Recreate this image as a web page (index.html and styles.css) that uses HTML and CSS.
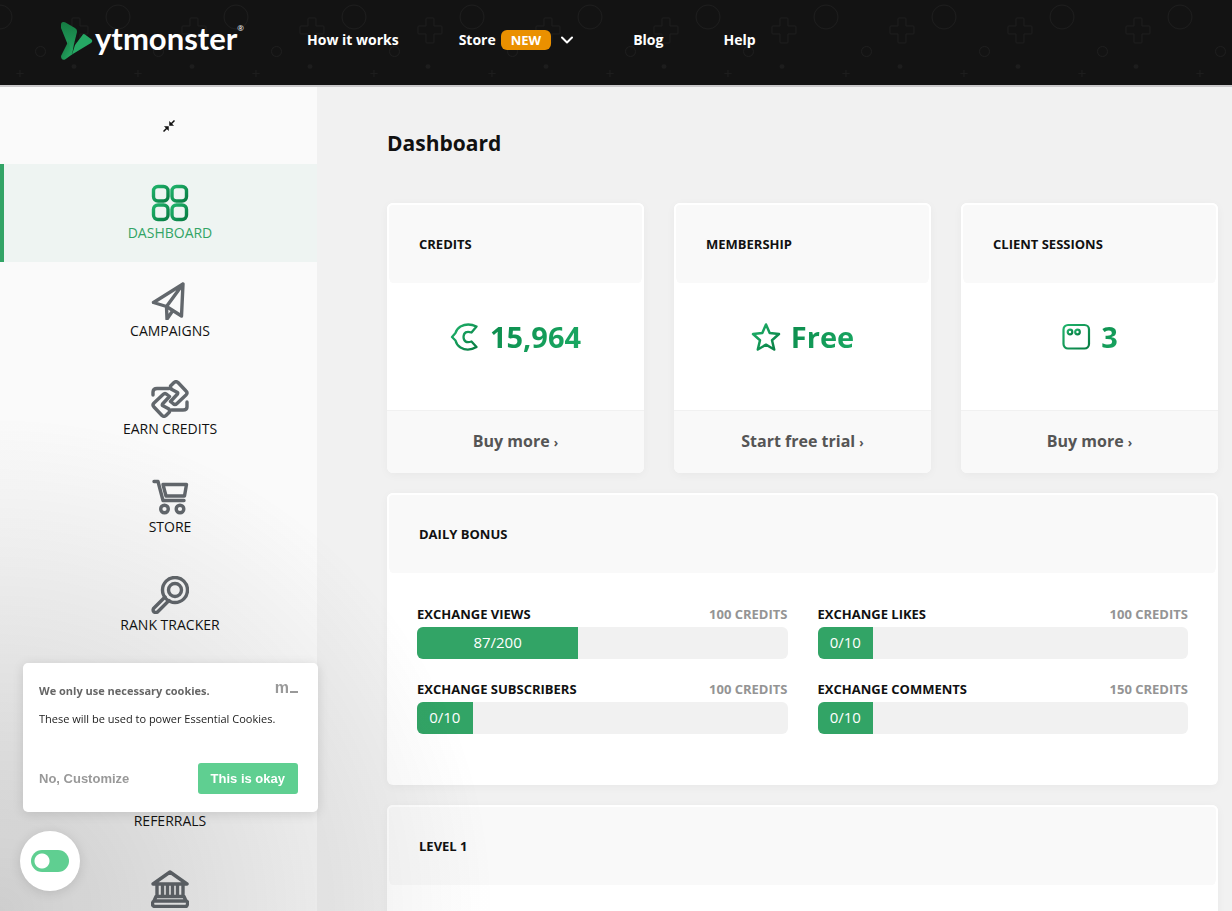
FILE: index.html
```html
<!DOCTYPE html>
<html lang="en">
<head>
<meta charset="utf-8">
<title>Dashboard</title>
<link rel="stylesheet" href="styles.css">
</head>
<body>
<svg class="defs" aria-hidden="true">
  <defs>
    <linearGradient id="green" x1="0" y1="0" x2="1" y2="1"><stop offset="0" stop-color="#1fb36b"/><stop offset="1" stop-color="#087c43"/></linearGradient>
    <linearGradient id="leaf" x1="0" y1="0" x2="1" y2="1"><stop offset="0" stop-color="#15733f"/><stop offset="1" stop-color="#27ae66"/></linearGradient>
    <linearGradient id="leaf-top" x1="0" y1="0" x2="0" y2="1"><stop offset="0" stop-color="#157a42"/><stop offset="1" stop-color="#26a763"/></linearGradient>
  </defs>
</svg>

<header class="topbar">
  <svg class="topbar-pattern" width="100%" height="100%" aria-hidden="true">
    <defs>
      <pattern id="shapes" width="118" height="85" patternUnits="userSpaceOnUse">
        <g fill="none" stroke="#1d1d1d" stroke-width="1">
          <circle cx="0" cy="17" r="12"/><circle cx="118" cy="17" r="12"/>
          <path d="M73 18h6q1 0 1 1v7h7q1 0 1 1v6q0 1-1 1h-7v8q0 1-1 1h-6q-1 0-1-1v-8h-7q-1 0-1-1v-6q0-1 1-1h7v-7q0-1 1-1z"/>
          <circle cx="40.500" cy="51.500" r="5"/>
          <path d="M20 70v7M16.500 73.500h7"/>
        </g>
        <circle cx="74" cy="66.500" r="2.300" fill="#1d1d1d"/>
      </pattern>
    </defs>
    <rect width="100%" height="100%" fill="url(#shapes)"/>
  </svg>
  <a class="brand" href="#" aria-label="ytmonster">
    <svg width="33" height="40" viewBox="0 0 33 40" aria-hidden="true">
      <path d="M1 4Q1 0 5 1.300L15 7Q17.500 8.500 17 11L14 23 12 34 1 7z" fill="url(#leaf-top)"/>
      <path d="M12 33.500 15 24 22.500 14Q23.500 12.500 25 13.500L31 18Q33.500 20 31 22z" fill="#25a864"/>
      <path d="M1 35 8.500 20 12 33.500 5 38.500Q1 39.500 1 35z" fill="url(#leaf)"/>
    </svg>
    <span class="brand-name">ytmonster</span><sup class="brand-mark">®</sup>
  </a>
  <nav class="topnav">
    <a href="#">How it works</a>
    <a href="#">Store <span class="new-tag">NEW</span>
      <svg width="12" height="8" viewBox="0 0 12 8" fill="none" stroke="#fff" stroke-width="2" stroke-linecap="round" stroke-linejoin="round" aria-hidden="true"><path d="M1 1.500 6 6.500 11 1.500"/></svg></a>
    <a href="#">Blog</a>
    <a href="#">Help</a>
  </nav>
</header>

<div class="layout">
  <aside class="sidebar">
    <button class="collapse" type="button" aria-label="Collapse menu">
      <svg width="12" height="12" viewBox="0 0 12 12" aria-hidden="true"><path d="M11.500.5 8 4M.5 11.500 4 8" stroke="#111" stroke-width="1.500"/><path d="M6.500 1.500v4h4zM5.500 10.500v-4h-4z" fill="#111" stroke="#111" stroke-width=".5"/></svg>
    </button>
    <nav>
      <a class="item active" href="#">
        <svg class="icon" viewBox="0 0 38 38"><g stroke="url(#green)"><rect x="2.500" y="2.500" width="14.500" height="14.500" rx="4.500"/><rect x="21" y="2.500" width="14.500" height="14.500" rx="4.500"/><rect x="2.500" y="21" width="14.500" height="14.500" rx="4.500"/><rect x="21" y="21" width="14.500" height="14.500" rx="4.500"/></g></svg>
        <span>DASHBOARD</span></a>
      <a class="item" href="#">
        <svg class="icon" viewBox="0 0 38 38"><path d="M32 2 2.500 20.500 15.500 24.500 30.500 34zM32 2 15.500 24.500 16 37 21.500 29"/></svg>
        <span>CAMPAIGNS</span></a>
      <a class="item" href="#">
        <svg class="icon" viewBox="0 0 38 38"><path d="M2 15V12Q2 8.500 6 8.500H18M36 22v5q0 3-4 3H20.500"/><path d="M19.500 6 23 2.500Q25 .8 27 2.500L35 11Q37 13 35 15L26 23.500Q24 25.500 22 23.500L19.500 21.500 26.500 14Q27 13 26.500 12.500L20 9z"/><path d="M18.500 32 15 35.500Q13 37.200 11 35.500L3 27Q1 25 3 23L12 14.500Q14 12.500 16 14.500L18.500 16.500 11.500 24Q11 25 11.500 25.500L18 29z"/></svg>
        <span>EARN CREDITS</span></a>
      <a class="item" href="#">
        <svg class="icon" viewBox="0 0 38 38"><path d="M3 3.500H7L12 22.500H33M12 6.500H35.500L33.500 18H15z"/><circle cx="13.500" cy="31" r="3.800"/><circle cx="29" cy="31" r="3.800"/></svg>
        <span>STORE</span></a>
      <a class="item" href="#">
        <svg class="icon" viewBox="0 0 38 38"><circle cx="24" cy="14" r="12.500"/><circle cx="24" cy="14" r="6.500"/><path d="M14 21 2.500 32.500Q1.500 34.500 3 36Q5 37 6.500 36L18 24.500"/></svg>
        <span>RANK TRACKER</span></a>
      <a class="item" href="#" aria-label="Tools"><svg class="icon" viewBox="0 0 38 38"><rect x="5" y="5" width="28" height="28" rx="5"/></svg><span></span></a>
      <a class="item" href="#">
        <svg class="icon" viewBox="0 0 38 38"><circle cx="19" cy="12" r="7"/><path d="M6 34Q6 23 19 23T32 34"/></svg>
        <span>REFERRALS</span></a>
      <a class="item" href="#" aria-label="Bank">
        <svg class="icon" viewBox="0 0 38 38"><path d="M2 14 19 2 36 14zM6 15V25M11.500 15V25M16.500 15V25M21.500 15V25M26.500 15V25M32 15V25M5 26.500H33L35 31H3zM3 31H35Q37 31 36.500 34T34 36.500H4Q1.500 36.500 1.500 34T3 31z"/></svg><span></span></a>
    </nav>
  </aside>

  <main class="content">
    <h1>Dashboard</h1>
    <div class="stats">
      <section class="card">
        <h2>CREDITS</h2>
        <div class="stat"><svg width="30" height="30" viewBox="0 0 30 30" fill="none" stroke="url(#green)" stroke-width="2.300" stroke-linejoin="round"><path d="M26.500 4.500Q18 .5 10.500 4.500Q6.500 7 5.500 11L2 15 5.500 18.500Q6.500 23 10.500 25.500Q18 30 26.500 25L21.500 19.500Q14 22 13.500 15Q14 8 21.500 10.500z"/></svg><strong>15,964</strong></div>
        <a class="more" href="#">Buy more <small>›</small></a>
      </section>
      <section class="card">
        <h2>MEMBERSHIP</h2>
        <div class="stat"><svg width="30" height="30" viewBox="0 0 30 30" fill="none" stroke="url(#green)" stroke-width="2.500" stroke-linejoin="round"><path d="M15 2.500 18.700 11 28 12 21 18.200 23.200 27.500 15 22.700 6.800 27.500 9 18.200 2 12 11.300 11z"/></svg><strong>Free</strong></div>
        <a class="more" href="#">Start free trial <small>›</small></a>
      </section>
      <section class="card">
        <h2>CLIENT SESSIONS</h2>
        <div class="stat"><svg width="30" height="30" viewBox="0 0 30 30" fill="none" stroke="url(#green)" stroke-width="2.200"><rect x="2.500" y="3" width="25.500" height="23.500" rx="4.500"/><circle cx="9" cy="10" r="2.300"/><circle cx="16.500" cy="10" r="2.300"/></svg><strong>3</strong></div>
        <a class="more" href="#">Buy more <small>›</small></a>
      </section>
    </div>

    <section class="card">
      <h2>DAILY BONUS</h2>
      <div class="bonus">
        <div><p><b>EXCHANGE VIEWS</b><span>100 CREDITS</span></p><div class="track"><div class="fill" style="width:43.5%">87/200</div></div></div>
        <div><p><b>EXCHANGE LIKES</b><span>100 CREDITS</span></p><div class="track"><div class="fill" style="width:15%">0/10</div></div></div>
        <div><p><b>EXCHANGE SUBSCRIBERS</b><span>100 CREDITS</span></p><div class="track"><div class="fill" style="width:15%">0/10</div></div></div>
        <div><p><b>EXCHANGE COMMENTS</b><span>150 CREDITS</span></p><div class="track"><div class="fill" style="width:15%">0/10</div></div></div>
      </div>
    </section>

    <section class="card level">
      <h2>LEVEL 1</h2>
    </section>
  </main>
</div>

<div class="shade"></div>
<section class="cookies" aria-label="Cookies">
  <div class="cookies-head"><b>We only use necessary cookies.</b><span>m<i></i></span></div>
  <p>These will be used to power Essential Cookies.</p>
  <div class="cookies-actions"><button type="button" class="customize">No, Customize</button><button type="button" class="okay">This is okay</button></div>
</section>
<label class="switch"><input type="checkbox" aria-label="Cookie settings"></label>
</body>
</html>
```
FILE: styles.css
```css
* { box-sizing: border-box; }
body {
  margin: 0;
  height: 100vh;
  overflow: hidden;
  background: #f1f1f1;
  color: #111;
  font-family: "Open Sans", "Noto Sans", sans-serif;
}
a { color: inherit; text-decoration: none; }
button { border: 0; background: none; padding: 0; font: inherit; cursor: pointer; }
h1, h2, p { margin: 0; }
.defs { position: absolute; width: 0; height: 0; }

.topbar {
  position: relative;
  display: flex;
  align-items: center;
  height: 87px;
  padding: 0 60px 4px;
  background: #131313;
  border-bottom: 2px solid #c9c8ca;
}
.topbar-pattern { position: absolute; inset: 0; }
.brand { position: relative; display: flex; align-items: center; width: 247px; color: #fff; }
.brand-name { font: 700 31px/40px Lato, sans-serif; padding: 0 0 6px 2px; }
.brand-mark { align-self: flex-start; font-size: 8px; line-height: 20px; }
.topnav { position: relative; display: flex; padding-bottom: 2px; font-size: 14px; font-weight: 700; color: #fff; }
.topnav a { display: flex; align-items: center; margin-right: 60px; }
.new-tag {
  margin: 0 10px 0 5px;
  padding: 0 10px;
  border-radius: 6px;
  background: #ea9000;
  font-size: 13px;
  line-height: 20px;
}

.layout { display: flex; align-items: flex-start; }
.sidebar { flex: 0 0 317px; background: #fafafa; }
.collapse { display: flex; align-items: center; justify-content: center; width: 100%; height: 77px; padding-left: 20px; }
.item {
  display: flex;
  flex-direction: column;
  align-items: center;
  height: 98px;
  padding: 20px 0 0 19px;
  border-left: 4px solid transparent;
  font-size: 14px;
  line-height: 22px;
}
.item.active { border-left-color: #32a466; background: #eef4f2; color: #32a466; }
.icon { width: 38px; height: 38px; fill: none; stroke: #62676c; stroke-width: 3.4; stroke-linejoin: round; stroke-linecap: round; }

.content { flex: 1; min-width: 0; padding: 40px 14px 0 70px; }
h1 { margin-bottom: 44px; font-size: 21px; line-height: 32px; font-weight: 700; }
.stats { display: grid; grid-template-columns: repeat(3, 1fr); gap: 30px; }
.card {
  margin-bottom: 20px;
  border-radius: 6px;
  background: #fff;
  box-shadow: 0 2px 10px rgba(0, 0, 0, .04);
}
.card h2 {
  height: 80px;
  padding: 0 30px;
  border: 2px solid #fff;
  border-bottom: 0;
  border-radius: 6px;
  background: #f9f9f9;
  font-size: 13px;
  line-height: 78px;
  font-weight: 700;
}
.stat { display: flex; align-items: center; justify-content: center; gap: 10px; height: 127px; padding-bottom: 20px; }
.stat strong {
  font-size: 29px;
  line-height: 40px;
  background: linear-gradient(135deg, #0b8a4b, #1bab65);
  background-clip: text;
  color: transparent;
}
.more {
  display: block;
  border-top: 1px solid #f1f1f1;
  border-radius: 0 0 6px 6px;
  background: #f9f9f9;
  color: #555;
  font-size: 16px;
  line-height: 60px;
  font-weight: 700;
  text-align: center;
}
.more small { font-size: 12px; }

.bonus { display: grid; grid-template-columns: 1fr 1fr; gap: 17px 30px; padding: 28px 30px 51px; }
.bonus p { display: flex; justify-content: space-between; font-size: 13px; line-height: 26px; font-weight: 700; }
.bonus p span { color: #949494; }
.bonus p b { font-weight: 700; }
.track { height: 32px; border-radius: 6px; overflow: hidden; background: #f1f1f1; }
.fill { background: #32a466; color: #fff; font-size: 15px; line-height: 30px; height: 32px; text-align: center; }
.level { height: 300px; }

.shade {
  position: fixed;
  left: 0;
  bottom: 0;
  width: 500px;
  height: 500px;
  pointer-events: none;
  background: radial-gradient(at bottom left, rgba(29, 29, 29, .2), rgba(29, 29, 29, 0) 70%);
}
.cookies {
  position: fixed;
  left: 23px;
  bottom: 99px;
  width: 295px;
  padding: 16px 20px 18px 16px;
  border-radius: 5px;
  background: #fff;
  box-shadow: 0 2px 12px rgba(0, 0, 0, .12);
  font-size: 11px;
  line-height: 24px;
}
.cookies-head { display: flex; justify-content: space-between; align-items: flex-start; height: 24px; margin-bottom: 4px; color: #666; }
.cookies-head span { display: flex; align-items: baseline; color: #999; font: 700 16px/18px "Liberation Sans", sans-serif; }
.cookies-head i { width: 8px; height: 2px; margin-left: 1px; background: #999; }
.cookies p { color: #222; }
.cookies-actions { display: flex; align-items: center; justify-content: space-between; margin-top: 32px; font: 700 13px/31px "Liberation Sans", sans-serif; }
.customize { color: #999; }
.okay { padding: 0 13px; border-radius: 3px; background: #5fcf91; color: #fff; }
.switch {
  position: fixed;
  left: 20px;
  bottom: 20px;
  display: flex;
  align-items: center;
  justify-content: center;
  width: 60px;
  height: 60px;
  border-radius: 50%;
  background: #fff;
  box-shadow: 0 2px 12px rgba(0, 0, 0, .12);
}
.switch input {
  appearance: none;
  width: 38px;
  height: 22px;
  margin: 0;
  border-radius: 11px;
  background: radial-gradient(circle at 11px 11px, #fff 7px, #5fcf91 8px);
}
```
